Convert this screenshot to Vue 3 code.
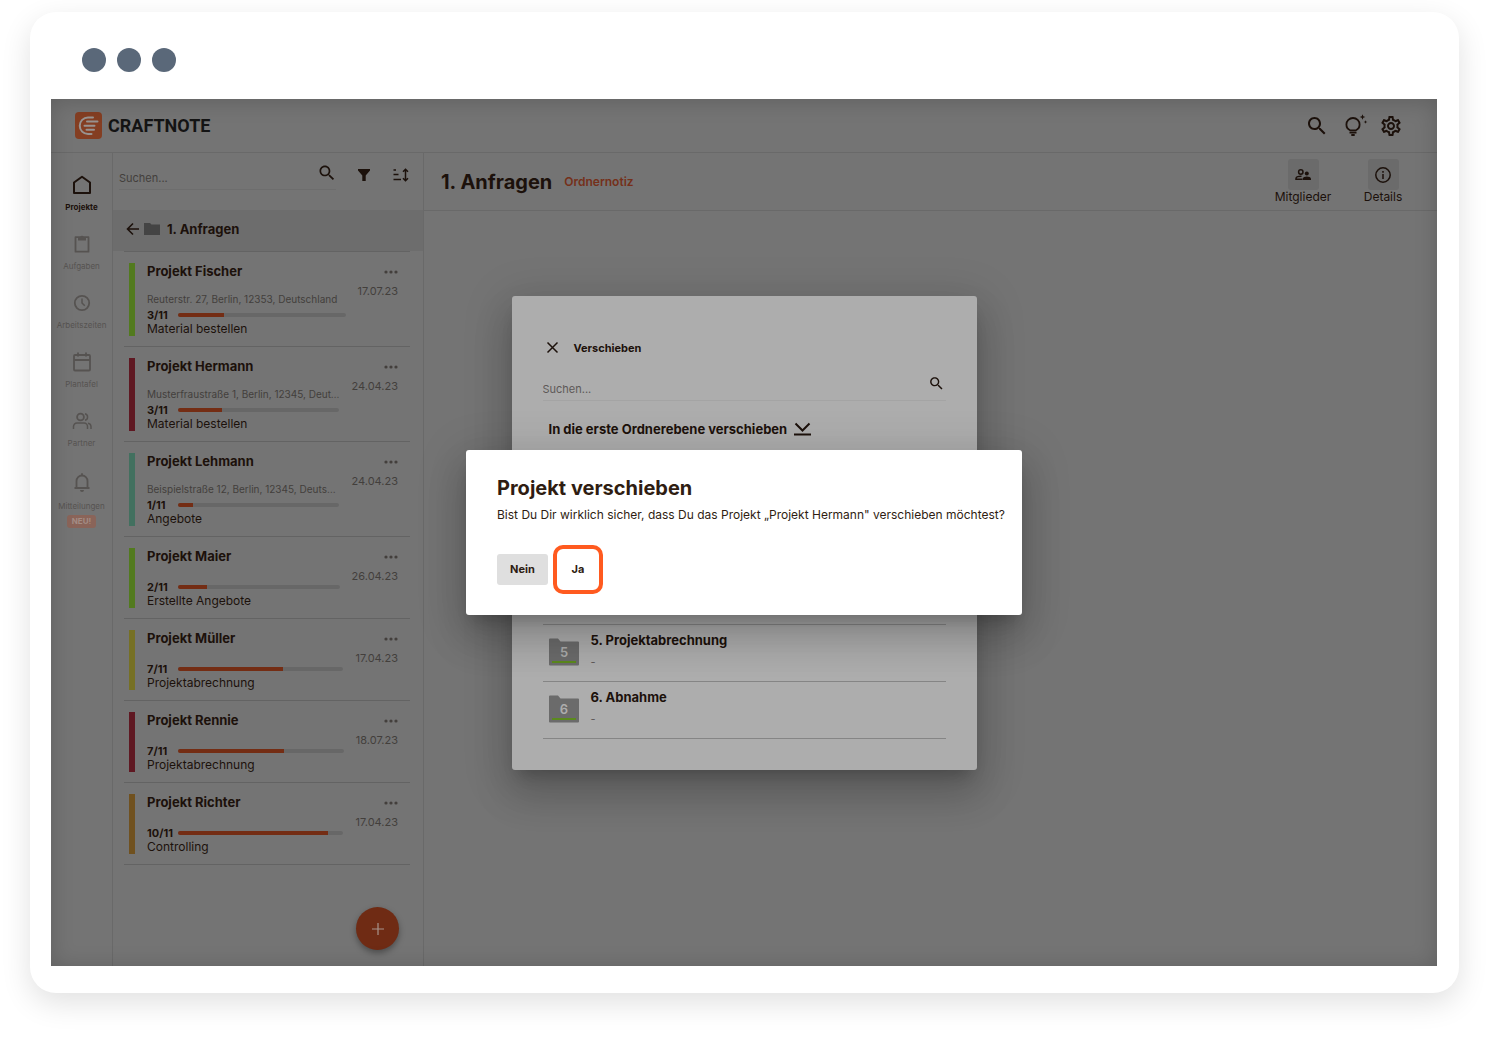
<script setup>
import { ref } from 'vue';

const search = ref('');
const folderSearch = ref('');

const navItems = [
    { id: 'projects', label: 'Projekte', active: true },
    { id: 'tasks', label: 'Aufgaben' },
    { id: 'times', label: 'Arbeitszeiten' },
    { id: 'board', label: 'Plantafel' },
    { id: 'partner', label: 'Partner' },
    { id: 'news', label: 'Mitteilungen', badge: 'NEU!' },
];

const total = 11;
const projects = [
    { name: 'Projekt Fischer', address: 'Reuterstr. 27, Berlin, 12353, Deutschland', done: 3, status: 'Material bestellen', date: '17.07.23', color: 'green' },
    { name: 'Projekt Hermann', address: 'Musterfraustraße 1, Berlin, 12345, Deutschland', done: 3, status: 'Material bestellen', date: '24.04.23', color: 'red' },
    { name: 'Projekt Lehmann', address: 'Beispielstraße 12, Berlin, 12345, Deutschland', done: 1, status: 'Angebote', date: '24.04.23', color: 'teal' },
    { name: 'Projekt Maier', done: 2, status: 'Erstellte Angebote', date: '26.04.23', color: 'green' },
    { name: 'Projekt Müller', done: 7, status: 'Projektabrechnung', date: '17.04.23', color: 'yellow' },
    { name: 'Projekt Rennie', done: 7, status: 'Projektabrechnung', date: '18.07.23', color: 'red' },
    { name: 'Projekt Richter', done: 10, status: 'Controlling', date: '17.04.23', color: 'orange' },
];

const folders = [
    { number: 5, name: 'Projektabrechnung' },
    { number: 6, name: 'Abnahme' },
];

const searchPath = 'M15.5 14h-.79l-.28-.27C15.41 12.59 16 11.11 16 9.5 16 5.91 13.09 3 9.5 3S3 5.91 3 9.5 5.91 16 9.5 16c1.61 0 3.09-.59 4.23-1.57l.27.28v.79l5 4.99L20.49 19l-4.99-5zm-6 0C7.01 14 5 11.99 5 9.5S7.01 5 9.5 5 14 7.01 14 9.5 11.99 14 9.5 14z';
</script>

<template>
    <div class="page">
        <div class="window">
            <div class="window-dots"><i></i><i></i><i></i></div>

            <div class="screen">
                <header class="topbar">
                    <a class="logo" href="#">
                        <svg width="27" height="27" viewBox="0 0 27 27">
                            <rect width="27" height="27" rx="4" fill="#843e22" />
                            <g fill="none" stroke="#989390" stroke-width="2" stroke-linecap="round">
                                <path d="M18 5.500H13a8 8 0 0 0 0 16.500h3.500" />
                                <path d="M12 9.600h10.500M9.500 13.700h10M11.500 17.800h7.500" />
                            </g>
                        </svg>
                        <span>CRAFTNOTE</span>
                    </a>
                    <div class="top-actions">
                        <button aria-label="Suchen">
                            <svg width="24" height="24" viewBox="0 0 24 24"><path :d="searchPath" fill="currentColor" /></svg>
                        </button>
                        <button aria-label="Tipps">
                            <svg width="24" height="24" viewBox="0 0 24 24" fill="none" stroke="currentColor" stroke-width="1.8">
                                <path d="M8 16.300C5.700 15.200 4.400 13.200 4.400 10.600a6.600 6.600 0 0 1 13.200 0c0 2.600-1.300 4.600-3.600 5.700zM7.500 18.700h7M9.300 21h3.400" />
                                <path d="M20.500.2l.8 2 2 .8-2 .8-.8 2-.8-2-2-.8 2-.8zM23.500 6.200l.5 1.300 1.300.5-1.300.5-.5 1.300-.5-1.300-1.300-.5 1.300-.5z" fill="currentColor" stroke="none" />
                            </svg>
                        </button>
                        <button aria-label="Einstellungen">
                            <svg width="24" height="24" viewBox="0 0 24 24"><path fill="currentColor" d="M19.430 12.980c.04-.32.07-.64.07-.98 0-.34-.03-.66-.07-.98l2.110-1.650c.19-.15.24-.42.12-.64l-2-3.460c-.09-.16-.26-.25-.44-.25-.06 0-.12.010-.17.030l-2.490 1c-.52-.4-1.080-.73-1.690-.98l-.38-2.650C14.460 2.180 14.250 2 14 2h-4c-.25 0-.46.18-.49.42l-.38 2.650c-.61.25-1.170.59-1.690.98l-2.490-1c-.06-.02-.12-.03-.18-.03-.17 0-.34.09-.43.25l-2 3.460c-.13.22-.07.49.12.64l2.110 1.650c-.04.32-.07.65-.07.98 0 .33.03.66.07.98l-2.110 1.650c-.19.15-.24.42-.12.64l2 3.460c.09.16.26.25.44.25.06 0 .12-.01.17-.03l2.490-1c.52.4 1.080.73 1.690.98l.38 2.650c.03.24.24.42.49.42h4c.25 0 .46-.18.49-.42l.38-2.650c.61-.25 1.170-.59 1.690-.98l2.490 1c.06.02.12.03.18.03.17 0 .34-.09.43-.25l2-3.460c.12-.22.07-.49-.12-.64l-2.110-1.650zm-1.980-1.710c.04.31.05.52.05.73 0 .21-.02.43-.05.73l-.14 1.130.89.7 1.080.84-.7 1.210-1.270-.51-1.040-.42-.9.68c-.43.32-.84.56-1.250.73l-1.060.43-.16 1.130-.2 1.350h-1.400l-.19-1.350-.16-1.130-1.060-.43c-.43-.18-.83-.41-1.230-.71l-.91-.7-1.060.43-1.270.51-.7-1.210 1.080-.84.89-.7-.14-1.130c-.03-.31-.05-.54-.05-.74s.02-.43.05-.73l.14-1.130-.89-.7-1.080-.84.7-1.210 1.270.51 1.040.42.9-.68c.43-.32.84-.56 1.250-.73l1.060-.43.16-1.130.2-1.350h1.390l.19 1.350.16 1.130 1.060.43c.43.18.83.41 1.230.71l.91.7 1.060-.43 1.270-.51.7 1.210-1.070.85-.89.7.14 1.130zM12 8c-2.210 0-4 1.790-4 4s1.790 4 4 4 4-1.790 4-4-1.790-4-4-4zm0 6c-1.100 0-2-.9-2-2s.9-2 2-2 2 .9 2 2-.9 2-2 2z" /></svg>
                        </button>
                    </div>
                </header>

                <div class="workspace">
                    <nav class="nav">
                        <a v-for="item in navItems" :key="item.id" href="#" :class="{ current: item.active, news: item.badge }">
                            <svg width="24" height="24" viewBox="0 0 24 24" fill="none" stroke="currentColor" stroke-width="1.800" stroke-linejoin="round">
                                <path v-if="item.id === 'projects'" d="M4 9.500L12 3.700l8 5.800V20H4z" stroke-width="2" />
                                <template v-else-if="item.id === 'tasks'">
                                    <path d="M5.500 5.200h13v14.500h-13z" />
                                    <path d="M8 5h2.300a1.800 1.800 0 0 1 3.400 0H16v3.500H8z" fill="currentColor" stroke="none" />
                                </template>
                                <template v-else-if="item.id === 'times'">
                                    <circle cx="12" cy="12" r="7.200" />
                                    <path d="M12 7.500V12l2.800 2.800" stroke-width="1.500" />
                                </template>
                                <template v-else-if="item.id === 'board'">
                                    <rect x="4" y="5" width="16" height="15.500" rx="1" />
                                    <path d="M4 10h16M8 2.500v4M16 2.500v4" />
                                </template>
                                <template v-else-if="item.id === 'partner'">
                                    <circle cx="10.500" cy="8" r="3.400" />
                                    <path d="M3.500 20v-2.500a3.500 3.500 0 0 1 3.500-3.500h7a3.500 3.500 0 0 1 3.500 3.500V20M15 4.700a3.400 3.400 0 0 1 0 6.600M18 14.200a3.500 3.500 0 0 1 3 3.300V20" stroke-width="1.500" />
                                </template>
                                <template v-else>
                                    <path d="M4.500 18h15M6.500 18v-7a5.500 5.500 0 0 1 11 0v7M12 5.500V3.300" />
                                    <path d="M10 20h4a2 2 0 0 1-4 0z" fill="currentColor" stroke="none" />
                                </template>
                            </svg>
                            <span>{{ item.label }}</span>
                            <b v-if="item.badge">{{ item.badge }}</b>
                        </a>
                    </nav>

                    <aside class="sidebar">
                        <div class="sidebar-tools">
                            <div class="search">
                                <input v-model="search" type="text" placeholder="Suchen..." aria-label="Projekte suchen">
                                <button aria-label="Suchen">
                                    <svg width="20" height="20" viewBox="0 0 24 24"><path :d="searchPath" fill="currentColor" /></svg>
                                </button>
                            </div>
                            <button class="tool" aria-label="Filter">
                                <svg width="14" height="14" viewBox="0 0 14 14"><path d="M1 1h12v1.500L8.700 7.500V13H5.300V7.500L1 2.500z" fill="currentColor" /></svg>
                            </button>
                            <button class="tool" aria-label="Sortieren">
                                <svg width="18" height="14" viewBox="0 0 18 14" fill="none" stroke="currentColor" stroke-width="1.500">
                                    <path d="M1.500 2h2.500M1.500 6.500h5M1.500 11.500h7.500M13.500 1.500v11M11 3.800l2.500-2.500L16 3.800M11 10.200l2.500 2.500 2.500-2.500" />
                                </svg>
                            </button>
                        </div>

                        <div class="group">
                            <button aria-label="Zurück">
                                <svg width="14" height="14" viewBox="0 0 14 14" fill="none" stroke="currentColor" stroke-width="1.600"><path d="M13 7H2M7 1.500L1.500 7 7 12.500" /></svg>
                            </button>
                            <svg width="16" height="12" viewBox="0 0 16 12"><path d="M0 0h6l1.500 1.500H16V12H0z" fill="#444" /></svg>
                            <h2>1. Anfragen</h2>
                        </div>

                        <ul class="projects">
                            <li v-for="project in projects" :key="project.name">
                                <div class="stripe" :class="project.color"></div>
                                <div class="info">
                                    <h3>{{ project.name }}</h3>
                                    <p v-if="project.address" class="address">{{ project.address }}</p>
                                    <div class="progress">
                                        <span>{{ project.done }}/{{ total }}</span>
                                        <div class="track"><div class="fill" :style="{ width: project.done / total * 100 + '%' }"></div></div>
                                    </div>
                                    <p class="status">{{ project.status }}</p>
                                </div>
                                <div class="meta">
                                    <button aria-label="Mehr">
                                        <svg width="14" height="4" viewBox="0 0 14 4" fill="currentColor"><circle cx="2" cy="2" r="1.600" /><circle cx="7" cy="2" r="1.600" /><circle cx="12" cy="2" r="1.600" /></svg>
                                    </button>
                                    <time>{{ project.date }}</time>
                                </div>
                            </li>
                        </ul>

                        <button class="fab" aria-label="Neues Projekt">
                            <svg width="12" height="12" viewBox="0 0 12 12"><path d="M6 0v12M0 6h12" stroke="currentColor" stroke-width="1.200" /></svg>
                        </button>
                    </aside>

                    <main class="content">
                        <div class="content-head">
                            <h1>1. Anfragen</h1>
                            <a href="#">Ordnernotiz</a>
                            <div class="content-actions">
                                <button>
                                    <span>
                                        <svg width="18" height="18" viewBox="0 0 18 18" fill="none" stroke="currentColor" stroke-width="1.500">
                                            <circle cx="6.800" cy="6" r="2.200" />
                                            <path d="M8.500 13.300H2v-.8c0-1.300 2.500-2.200 5.500-2.200" />
                                            <circle cx="12.800" cy="7.500" r="2" fill="currentColor" stroke="none" />
                                            <path d="M8.800 14v-1.200c0-1.500 2.200-2.200 4-2.200s4.200.7 4.200 2.200V14z" fill="currentColor" stroke="none" />
                                        </svg>
                                    </span>
                                    Mitglieder
                                </button>
                                <button>
                                    <span>
                                        <svg width="18" height="18" viewBox="0 0 18 18" fill="none" stroke="currentColor" stroke-width="1.500">
                                            <circle cx="9" cy="9" r="7.200" />
                                            <path d="M9 8v5M9 5v1.700" />
                                        </svg>
                                    </span>
                                    Details
                                </button>
                            </div>
                        </div>
                    </main>
                </div>

                <div class="overlay">
                    <section class="dialog picker" role="dialog" aria-label="Verschieben">
                        <div class="picker-head">
                            <button aria-label="Schließen">
                                <svg width="11" height="11" viewBox="0 0 11 11"><path d="M.5.5l10 10M10.500.5l-10 10" stroke="currentColor" stroke-width="1.500" /></svg>
                            </button>
                            <h2>Verschieben</h2>
                        </div>
                        <div class="search">
                            <input v-model="folderSearch" type="text" placeholder="Suchen..." aria-label="Ordner suchen">
                            <button aria-label="Suchen">
                                <svg width="17" height="17" viewBox="0 0 24 24"><path :d="searchPath" fill="currentColor" /></svg>
                            </button>
                        </div>
                        <button class="move-root">
                            In die erste Ordnerebene verschieben
                            <svg width="17" height="14" viewBox="0 0 17 14" fill="none" stroke="currentColor" stroke-width="2"><path d="M1.500 1.500l7 7 7-7M0 12.500h17" /></svg>
                        </button>
                        <ul class="folders">
                            <li v-for="folder in folders" :key="folder.number">
                                <svg width="30" height="28" viewBox="0 0 30 28">
                                    <path d="M0 1.500Q0 .5 1 .5h8l2.500 3H29q1 0 1 1V26.500q0 1-1 1H1q-1 0-1-1z" fill="#6b6b6b" />
                                    <path d="M3 24h24" stroke="#5b8a1d" stroke-width="2" />
                                    <text x="15" y="19" text-anchor="middle">{{ folder.number }}</text>
                                </svg>
                                <div>
                                    <h3>{{ folder.number }}. {{ folder.name }}</h3>
                                    <p>-</p>
                                </div>
                            </li>
                        </ul>
                    </section>
                </div>

                <div class="overlay">
                    <section class="dialog confirm" role="alertdialog" aria-labelledby="confirm-title">
                        <h2 id="confirm-title">Projekt verschieben</h2>
                        <p>Bist Du Dir wirklich sicher, dass Du das Projekt „Projekt Hermann" verschieben möchtest?</p>
                        <div class="confirm-actions">
                            <button class="no">Nein</button>
                            <button class="yes">Ja</button>
                        </div>
                    </section>
                </div>
            </div>
        </div>
    </div>
</template>

<style>
body {
    margin: 0;
    background: #fff;
}
</style>

<style scoped>
.page {
    --ink: #1c110b;
    --line: #696969;
    --muted: #433f3c;
    display: flex;
    box-sizing: border-box;
    min-height: 100vh;
    padding: 12px 30px 45px;
    font-family: Inter, "Open Sans", sans-serif;
    font-size: 11px;
    line-height: 14px;
    color: var(--ink);
}

.page * {
    box-sizing: border-box;
}

h1, h2, h3, p, ul {
    margin: 0;
    padding: 0;
}

ul {
    list-style: none;
}

a {
    color: inherit;
    text-decoration: none;
}

button {
    display: flex;
    align-items: center;
    justify-content: center;
    padding: 0;
    border: 0;
    background: none;
    color: inherit;
    font: inherit;
    cursor: pointer;
}

svg {
    display: block;
    flex: none;
    overflow: visible;
}

.window {
    display: flex;
    flex: 1;
    flex-direction: column;
    min-width: 0;
    padding: 36px 22px 27px 21px;
    border-radius: 26px;
    background: #fff;
    box-shadow: 0 10px 30px rgba(0, 0, 0, 0.12);
}

.window-dots {
    display: flex;
    gap: 11px;
    padding: 0 31px 27px;
}

.window-dots i {
    width: 24px;
    height: 24px;
    border-radius: 50%;
    background: #5a6879;
}

.screen {
    position: relative;
    display: flex;
    flex: 1;
    flex-direction: column;
    overflow: hidden;
    background: #747474;
}

.screen::after {
    content: "";
    position: absolute;
    inset: 0;
    box-shadow: inset 0 2px 22px rgba(0, 0, 0, 0.18);
    pointer-events: none;
}

.topbar {
    display: flex;
    align-items: center;
    justify-content: space-between;
    height: 54px;
    padding: 0 28px 0 24px;
    border-bottom: 1px solid var(--line);
}

.logo {
    display: flex;
    align-items: center;
    gap: 6px;
    color: #141414;
    font: bold 18px/24px Roboto, sans-serif;
}

.top-actions {
    display: flex;
}

.top-actions button {
    width: 37px;
    height: 37px;
}

.workspace {
    display: flex;
    flex: 1;
}

.nav {
    display: flex;
    flex-direction: column;
    flex: none;
    gap: 18px;
    width: 62px;
    padding-top: 20px;
    border-right: 1px solid var(--line);
}

.nav a {
    display: flex;
    flex-direction: column;
    align-items: center;
    gap: 4px;
    color: #565351;
    font-size: 8px;
    line-height: 13px;
    white-space: nowrap;
}

.nav a.current {
    color: var(--ink);
    font-weight: bold;
}

.nav a.news {
    gap: 2px;
    padding-top: 2px;
}

.nav a.news span {
    padding-top: 4px;
}

.nav b {
    padding: 0 5px;
    border-radius: 3px;
    background: #8a6459;
    color: #a38c85;
}

.sidebar {
    display: flex;
    flex-direction: column;
    flex: none;
    width: 311px;
    border-right: 1px solid var(--line);
}

.sidebar-tools {
    display: flex;
    height: 57px;
    padding: 0 4px 0 6px;
}

.search {
    display: flex;
    align-items: flex-end;
    height: 37px;
    border-bottom: 1px solid #6d6d6d;
}

.sidebar-tools .search {
    flex: 1;
    min-width: 0;
    margin-right: 9px;
}

.search input {
    flex: 1;
    min-width: 0;
    height: 22px;
    padding: 0;
    border: 0;
    outline: 0;
    background: none;
    color: inherit;
    font: inherit;
}

.search input::placeholder {
    color: var(--muted);
    opacity: 1;
}

.search button {
    width: 18px;
    height: 32px;
}

.tool {
    width: 37px;
    height: 44px;
}

.group {
    display: flex;
    align-items: center;
    height: 41px;
    padding: 0 12px 4px;
    background: #6d6d6d;
}

.group button {
    margin: 0 4px 0 1px;
}

.group h2 {
    margin-left: 7px;
    font-size: 13px;
    line-height: 18px;
}

.projects {
    margin: 0 13px 0 11px;
    border-top: 1px solid #636363;
}

.projects li {
    display: flex;
    padding: 11px 12px 10px 5px;
    border-bottom: 1px solid #636363;
}

.stripe {
    flex: none;
    width: 6px;
    margin-right: 12px;
}

.stripe.green { background: #527a1e; }
.stripe.red { background: #5f1822; }
.stripe.teal { background: #42705f; }
.stripe.yellow { background: #767024; }
.stripe.orange { background: #70511f; }

.info {
    flex: 1;
    min-width: 0;
}

.info h3 {
    margin-bottom: 16px;
    font-size: 13px;
    line-height: 16px;
}

.info h3:has(+ .address) {
    margin-bottom: 11px;
}

.address {
    overflow: hidden;
    color: var(--muted);
    font-size: 10px;
    line-height: 18px;
    text-overflow: ellipsis;
    white-space: nowrap;
}

.progress {
    display: flex;
    align-items: center;
}

.progress span {
    width: 31px;
    font-weight: bold;
}

.track {
    flex: 1;
    height: 4px;
    border-radius: 2px;
    background: #676767;
    overflow: hidden;
}

.fill {
    height: 100%;
    background: #742d14;
}

.status {
    font-size: 12px;
}

.meta {
    display: flex;
    flex-direction: column;
    align-items: flex-end;
    gap: 3px;
    margin-left: 12px;
    color: var(--muted);
}

.meta button {
    height: 18px;
}

.fab {
    align-self: flex-end;
    width: 43px;
    height: 43px;
    margin: auto 24px 16px 0;
    border-radius: 50%;
    background: #6f2b14;
    color: #a8948c;
    box-shadow: 0 3px 6px rgba(0, 0, 0, 0.35);
}

.content {
    flex: 1;
    min-width: 0;
}

.content-head {
    display: flex;
    align-items: center;
    height: 58px;
    padding: 0 14px 0 17px;
    border-bottom: 1px solid var(--line);
    font-size: 12px;
}

.content-head h1 {
    font-size: 20px;
    line-height: 24px;
}

.content-head a {
    margin-left: 12px;
    color: #75301a;
    font-weight: 600;
}

.content-actions {
    display: flex;
    margin-left: auto;
}

.content-actions button {
    flex-direction: column;
    width: 80px;
}

.content-actions span {
    display: grid;
    place-items: center;
    width: 31px;
    height: 31px;
    border-radius: 3px;
    background: #6b6b6b;
}

.overlay {
    position: absolute;
    inset: 0;
    display: grid;
    place-items: center;
}

.dialog {
    border-radius: 3px;
    box-shadow: 0 11px 15px -7px rgba(0, 0, 0, 0.2), 0 24px 38px 3px rgba(0, 0, 0, 0.14), 0 9px 46px 8px rgba(0, 0, 0, 0.12);
}

.picker {
    display: flex;
    flex-direction: column;
    width: 465px;
    max-width: 100%;
    min-height: 474px;
    padding: 43px 31px 31px;
    background: #adadad;
}

.picker-head {
    display: flex;
    align-items: center;
    height: 18px;
    margin: 0 4px 7px;
}

.picker-head h2 {
    margin-left: 16px;
    font-size: 11px;
}

.picker .search {
    border-color: #a4a4a4;
}

.picker .search input::placeholder {
    color: #5d5957;
}

.move-root {
    align-self: flex-start;
    gap: 7px;
    margin: 19px 6px;
    font-size: 13px;
    font-weight: bold;
    line-height: 18px;
}

.folders {
    margin-top: auto;
    border-top: 1px solid #8a8a8a;
}

.folders li {
    display: flex;
    align-items: center;
    gap: 12px;
    height: 57px;
    padding: 0 6px 2px;
    border-bottom: 1px solid #858585;
}

.folders text {
    fill: #adadad;
    font-size: 13px;
    font-weight: 600;
}

.folders div {
    padding-bottom: 4px;
}

.folders h3 {
    margin-bottom: 6px;
    font-size: 13px;
    line-height: 18px;
}

.folders p {
    color: #5d5957;
}

.confirm {
    width: 556px;
    max-width: 100%;
    padding: 26px 16px 21px 31px;
    background: #fff;
    color: #2f1d12;
}

.confirm h2 {
    font-size: 20px;
    line-height: 24px;
}

.confirm p {
    margin: 8px 0 23px;
    font-size: 12px;
}

.confirm-actions {
    display: flex;
    align-items: center;
    gap: 5px;
}

.confirm button {
    padding-bottom: 2px;
    font-weight: bold;
}

.no {
    width: 51px;
    height: 31px;
    border-radius: 3px;
    background: #dfdfdf;
}

.yes {
    width: 50px;
    height: 49px;
    border: 4px solid #ff5a1f;
    border-radius: 10px;
}
</style>
